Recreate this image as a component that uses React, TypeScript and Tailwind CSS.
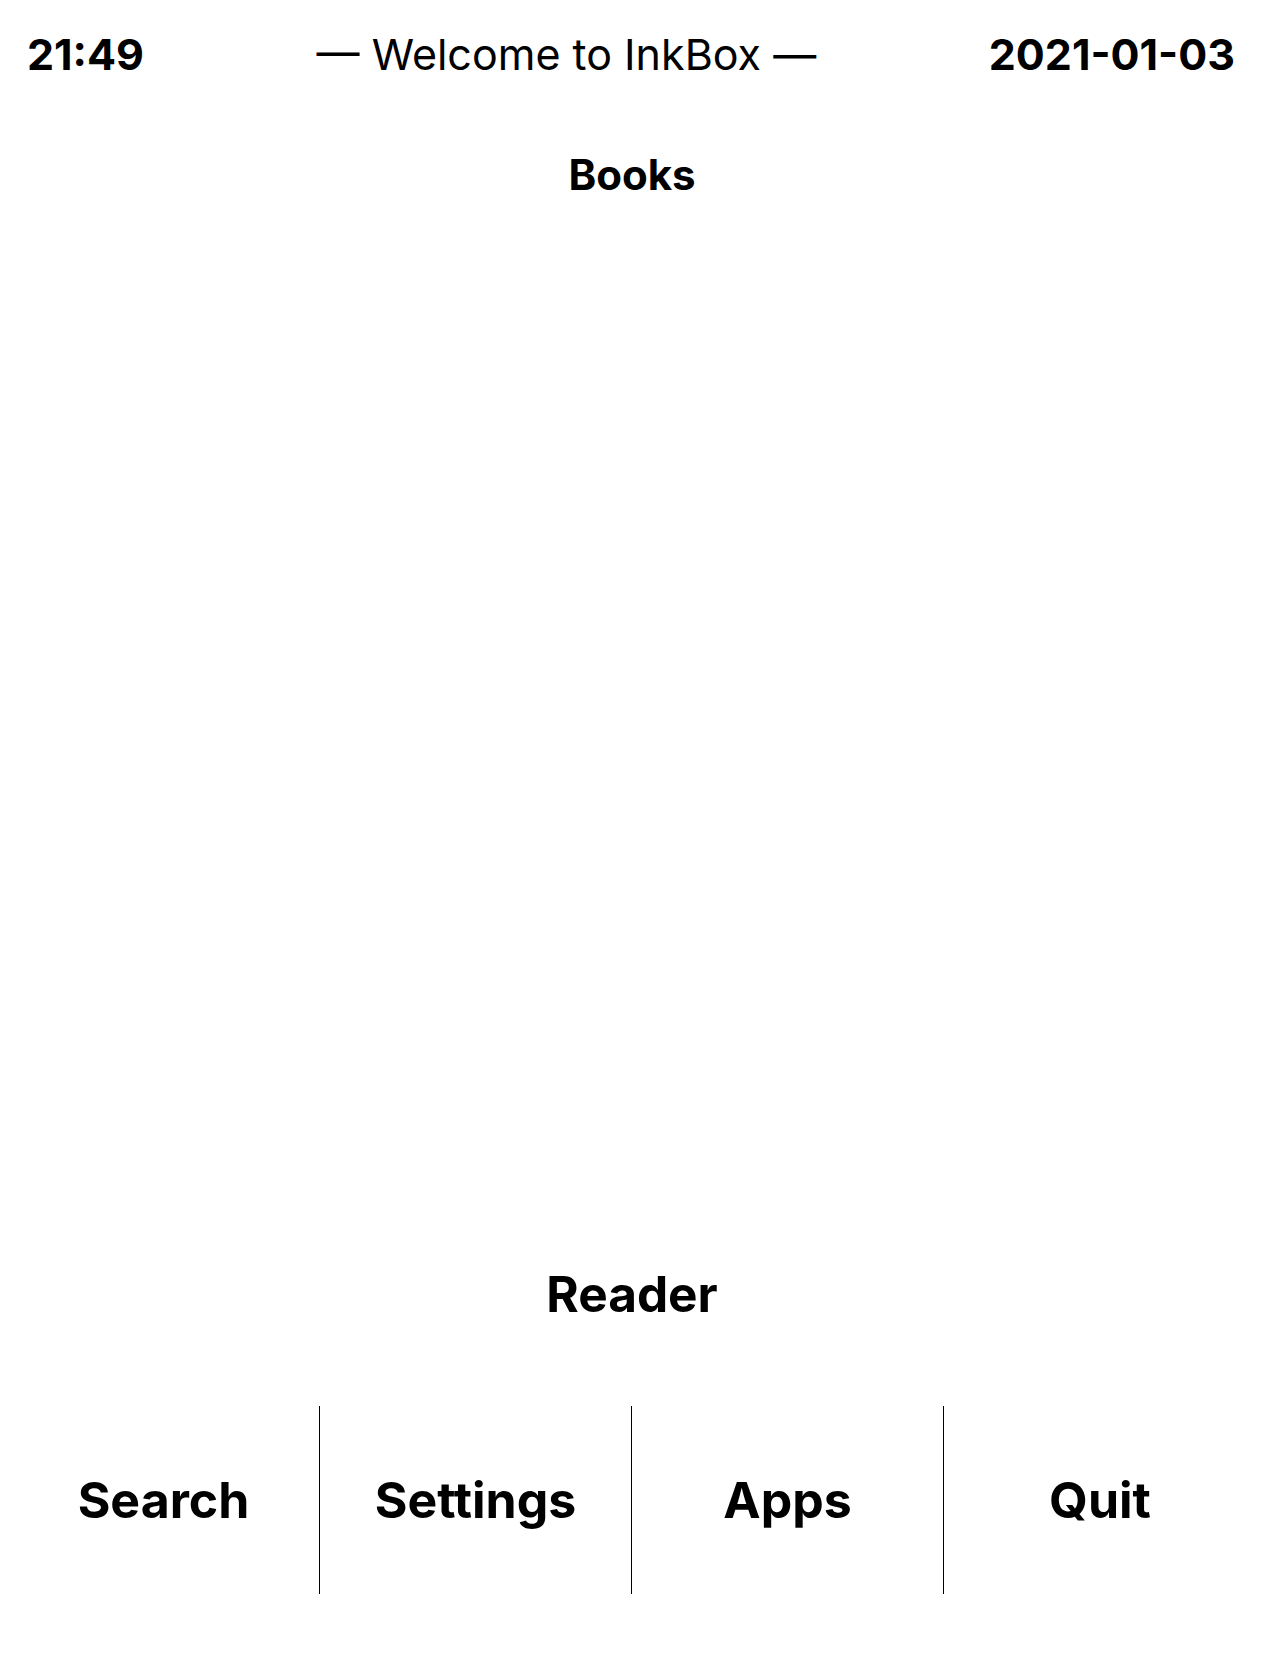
export default function App() {
    const buttons = ["Search", "Settings", "Apps", "Quit"];

    return (
        <div
            className="flex h-[1680px] w-[1264px] flex-col bg-white text-black"
            style={{ fontFamily: "Inter, 'Noto Sans', sans-serif" }}
        >
            {/* Status bar */}
            <div className="flex h-[108px] items-center justify-between pl-[27px] pr-[29px] text-[43px] leading-none">
                <span className="font-bold">21:49</span>
                <span className="font-normal">— Welcome to InkBox —</span>
                <span className="font-bold">2021-01-03</span>
            </div>

            {/* Books */}
            <div className="flex h-[134px] items-center justify-center">
                <h2 className="text-[42px] font-bold leading-none">Books</h2>
            </div>

            {/* Book list (empty) */}
            <div className="flex-1" />

            {/* Reader */}
            <div className="flex h-[80px] items-center justify-center">
                <h1 className="text-[49.5px] font-bold leading-none">Reader</h1>
            </div>

            {/* Bottom buttons */}
            <div className="mt-[71px] mb-[86px] grid h-[188px] grid-cols-4 px-2">
                {buttons.map((label, i) => (
                    <button
                        key={label}
                        className={
                            i < buttons.length - 1
                                ? "flex items-center justify-center border-r border-black text-[50px] font-bold leading-none"
                                : "flex items-center justify-center text-[50px] font-bold leading-none"
                        }
                    >
                        {label}
                    </button>
                ))}
            </div>
        </div>
    );
}
